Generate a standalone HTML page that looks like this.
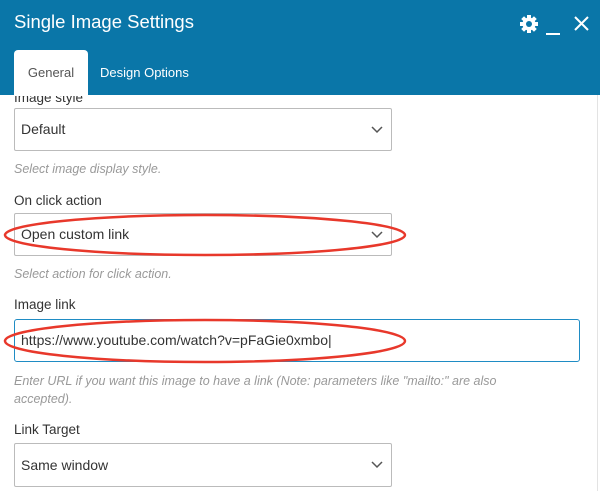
<!DOCTYPE html>
<html><head><style>
body{margin:0;width:600px;height:491px;overflow:hidden;background:#fff;font-family:"Liberation Sans",sans-serif;position:relative}
.hdr{position:absolute;left:0;top:0;width:600px;height:95px;background:#0a76a8}
.title{position:absolute;left:14px;top:11px;color:#fff;font-size:18.5px}
.tab{position:absolute;left:14px;top:50px;width:74px;height:46px;background:#fff;border-radius:4px 4px 0 0;color:#555;font-size:13px;text-align:center;line-height:46px}
.tab2{position:absolute;left:100px;top:50px;color:#fff;font-size:13px;line-height:46px}
.lbl{position:absolute;left:14px;font-size:13.5px;color:#333}
.hint{position:absolute;left:14px;font-size:12.5px;color:#999;font-style:italic;line-height:18px}
.sel{position:absolute;left:14px;width:378px;height:43px;border:1px solid #bbb;border-radius:2px;box-sizing:border-box;font-size:14px;color:#333;line-height:41px;padding-left:6px}
.sel svg{position:absolute;right:8px;top:17px}
.sb{position:absolute;left:597px;top:95px;width:1px;height:396px;background:#e3e3e3}
</style></head><body>
<div class="hdr">
<div class="title">Single Image Settings</div>
<svg style="position:absolute;left:519px;top:14px" width="20" height="20" viewBox="0 0 20 20"><g fill="#fff"><circle cx="10" cy="10" r="6.5"/><rect x="8" y="1" width="4" height="18"/><rect x="1" y="8" width="18" height="4"/><rect x="8" y="1" width="4" height="18" transform="rotate(45 10 10)"/><rect x="8" y="1" width="4" height="18" transform="rotate(-45 10 10)"/></g><circle cx="10" cy="10" r="3" fill="#0a76a8"/></svg>
<div style="position:absolute;left:546px;top:33px;width:14px;height:2px;background:#fff"></div>
<svg style="position:absolute;left:574px;top:16px" width="15" height="15"><path d="M1 1L14 14M14 1L1 14" stroke="#fff" stroke-width="2"/></svg>
<div class="tab">General</div>
<div class="tab2">Design Options</div>
</div>
<div class="lbl" style="top:90px;clip-path:inset(6px 0 0 0)">Image style</div>
<div class="sel" style="top:108px">Default<svg width="12" height="8"><path d="M1 1l5 5 5-5" stroke="#555" stroke-width="1.5" fill="none"/></svg></div>
<div class="hint" style="top:160px">Select image display style.</div>
<div class="lbl" style="top:193px">On click action</div>
<div class="sel" style="top:213px">Open custom link<svg width="12" height="8"><path d="M1 1l5 5 5-5" stroke="#555" stroke-width="1.5" fill="none"/></svg></div>
<div class="hint" style="top:265px">Select action for click action.</div>
<div class="lbl" style="top:297px">Image link</div>
<div class="sel" style="top:319px;width:566px;border:1.5px solid #1f8cc4;border-radius:3px">https://www.youtube.com/watch?v=pFaGie0xmbo|</div>
<div class="hint" style="top:372px">Enter URL if you want this image to have a link (Note: parameters like "mailto:" are also<br>accepted).</div>
<div class="lbl" style="top:422px">Link Target</div>
<div class="sel" style="top:443px;height:44px;line-height:42px">Same window<svg width="12" height="8"><path d="M1 1l5 5 5-5" stroke="#555" stroke-width="1.5" fill="none"/></svg></div>
<div class="sb"></div>
<svg style="position:absolute;left:0;top:0" width="600" height="491"><g fill="none" stroke="#e8382b" stroke-width="2.5"><ellipse cx="205" cy="235" rx="200" ry="20"/><ellipse cx="205" cy="341" rx="200" ry="21"/></g></svg>
</body></html>
